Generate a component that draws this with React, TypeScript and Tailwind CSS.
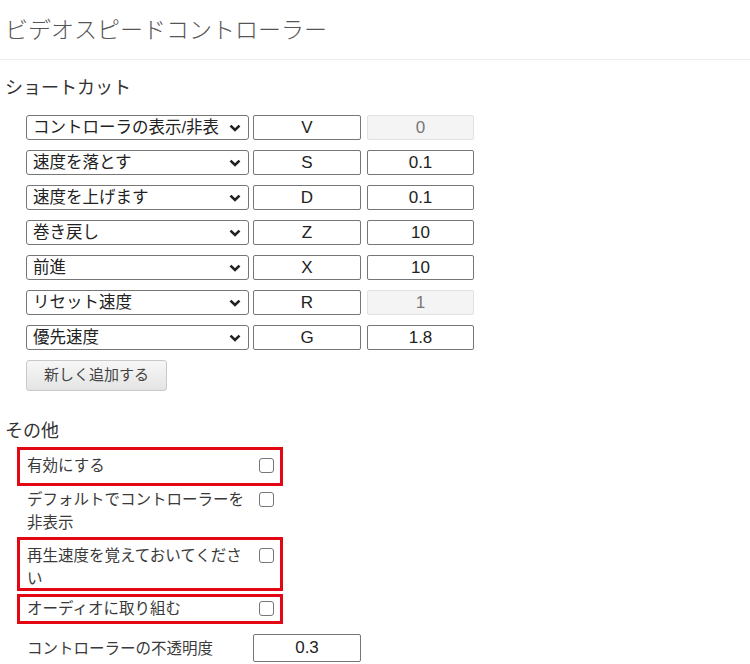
import React from "react";

type Shortcut = { action: string; key: string; value: string; disabled?: boolean };

const shortcuts: Shortcut[] = [
  { action: "コントローラの表示/非表", key: "V", value: "0", disabled: true },
  { action: "速度を落とす", key: "S", value: "0.1" },
  { action: "速度を上げます", key: "D", value: "0.1" },
  { action: "巻き戻し", key: "Z", value: "10" },
  { action: "前進", key: "X", value: "10" },
  { action: "リセット速度", key: "R", value: "1", disabled: true },
  { action: "優先速度", key: "G", value: "1.8" },
];

function Chevron() {
  return (
    <svg className="w-[12px] h-[8px] shrink-0" viewBox="0 0 12 8" aria-hidden>
      <polyline points="1.5,1.6 6,6 10.5,1.6" fill="none" stroke="#222" strokeWidth="2.6" />
    </svg>
  );
}

function ShortcutRow({ row }: { row: Shortcut }) {
  return (
    <div className="flex items-center h-[25px]">
      <div className="w-[223px] h-[25px] border border-[#767676] rounded-[3px] flex items-center pl-[6px] pr-[7px] bg-white">
        <span className="flex-1 whitespace-nowrap text-[16.5px] text-[#222] leading-none">{row.action}</span>
        <Chevron />
      </div>
      <input
        className="ml-[4px] w-[108px] h-[25px] border border-[#767676] rounded-[2px] text-center text-[17px] text-[#222] bg-white outline-none"
        readOnly
        value={row.key}
      />
      <input
        className={`ml-[6px] w-[107px] h-[25px] border rounded-[2px] text-center text-[17px] outline-none ${
          row.disabled ? "bg-[#f4f4f4] border-[#e2e2e2] text-[#777]" : "bg-white border-[#767676] text-[#222]"
        }`}
        disabled={row.disabled}
        readOnly
        value={row.value}
      />
    </div>
  );
}

function Box() {
  return <span className="block w-[15px] h-[15px] border border-[#767676] rounded-[3px] bg-white shrink-0" />;
}

function OptionRow({
  label,
  marked,
  className,
  boxClass,
}: {
  label: string;
  marked?: boolean;
  className: string;
  boxClass: string;
}) {
  return (
    <div className={`relative flex items-start w-[247px] ${className}`}>
      <span className="w-[225px] text-[15.5px] leading-[23px] text-[#3a3a3a]">{label}</span>
      <span className="ml-[7px] mt-[4px]">
        <Box />
      </span>
      {marked ? (
        <span className={`absolute -left-[10px] -right-[9px] border-[3px] border-[#e30613] pointer-events-none ${boxClass}`} />
      ) : null}
    </div>
  );
}

export default function App() {
  return (
    <div
      className="w-[750px] h-[664px] bg-white overflow-hidden"
      style={{ fontFamily: '"Liberation Sans", "Noto Sans CJK JP", sans-serif' }}
    >
      <div className="pt-[14px] pl-[5px]">
        <h1 className="text-[23px] leading-[32px] text-[#555] font-light">ビデオスピードコントローラー</h1>
      </div>
      <div className="mt-[13px] border-t border-[#ececec]" />

      <h2 className="mt-[15px] pl-[5px] text-[18px] leading-[26px] text-[#333]">ショートカット</h2>
      <div className="mt-[14px] pl-[26px] flex flex-col gap-[10px]">
        {shortcuts.map((row) => (
          <ShortcutRow key={row.key} row={row} />
        ))}
      </div>
      <div className="pl-[26px] mt-[10px]">
        <button
          className="h-[31px] w-[141px] border border-[#c9c9c9] rounded-[3px] bg-gradient-to-b from-[#f7f7f7] to-[#e4e4e4] text-[15px] text-[#444]"
          type="button"
        >
          新しく追加する
        </button>
      </div>

      <h2 className="mt-[27px] pl-[5px] text-[18px] leading-[26px] text-[#333]">その他</h2>
      <div className="pl-[27px]">
        <OptionRow label="有効にする" marked className="mt-[10px]" boxClass="-top-[7px] -bottom-[9px]" />
        <OptionRow label="デフォルトでコントローラーを非表示" className="mt-[11px]" boxClass="" />
        <OptionRow
          label="再生速度を覚えておいてください"
          marked
          className="mt-[10px]"
          boxClass="-top-[7px] -bottom-[1px]"
        />
        <OptionRow label="オーディオに取り組む" marked className="mt-[7px]" boxClass="-top-[3px] -bottom-[4px]" />
        <div className="mt-[14px] flex items-center">
          <span className="w-[226px] text-[15.5px] leading-[23px] text-[#3a3a3a]">コントローラーの不透明度</span>
          <input
            className="w-[108px] h-[28px] border border-[#767676] rounded-[2px] text-center text-[17px] text-[#222] bg-white outline-none"
            readOnly
            value="0.3"
          />
        </div>
      </div>
    </div>
  );
}
